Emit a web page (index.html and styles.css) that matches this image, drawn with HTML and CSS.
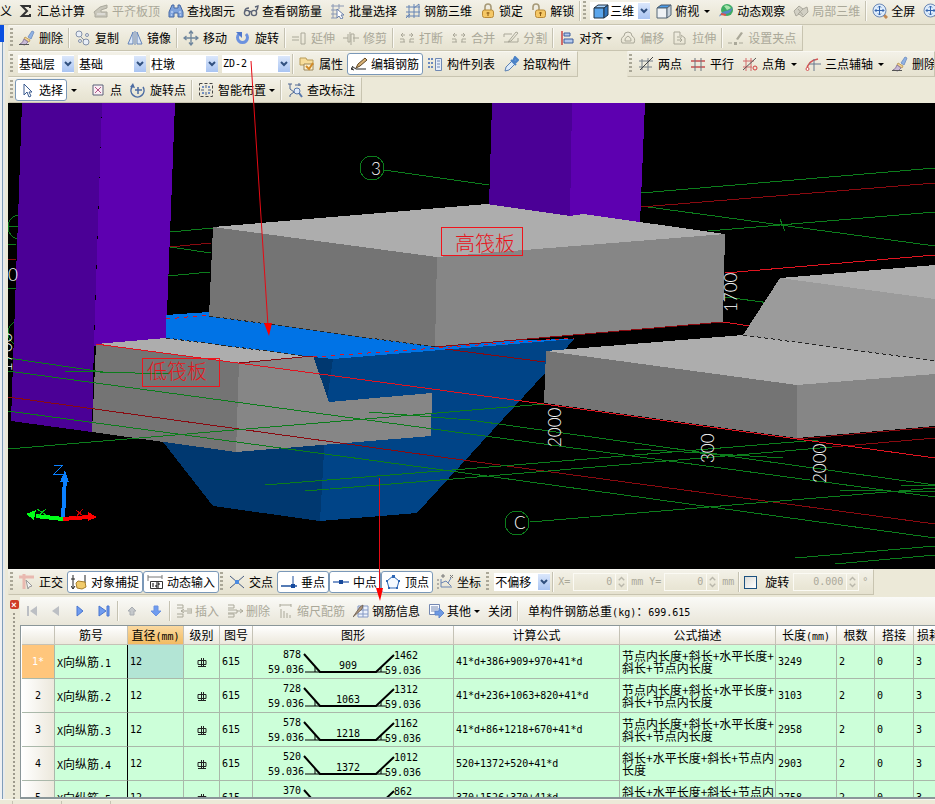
FILE: index.html
```html
<!DOCTYPE html>
<html lang="zh-CN">
<head>
<meta charset="utf-8">
<title>钢筋三维</title>
<link rel="stylesheet" href="styles.css">
</head>
<body>
<svg class="defs" aria-hidden="true">
  <symbol id="sigma" viewBox="0 0 16 16"><path d="M12 5V3H4l5 5-5 5h8v-2" fill="none" stroke="#333" stroke-width="2"/></symbol>
  <symbol id="align" viewBox="0 0 16 16"><path d="M1 9l6-5 7-2v3L8 7v2h6v5H2v-3z" fill="#c9c7bb" stroke="#aaa89c"/><path d="M4 11h8" stroke="#eee"/></symbol>
  <symbol id="find" viewBox="0 0 16 16"><path d="M4 2h2v3h4V2h2l3 7v5h-5v-4H6v4H1V9z" fill="#7fa3dc" stroke="#4668a3"/><path d="M3 9h2M11 9h2M3 12h1M12 12h1" stroke="#dfeaff"/></symbol>
  <symbol id="glasses" viewBox="0 0 16 16"><g fill="none" stroke="#5b6375" stroke-width="1.4"><circle cx="4" cy="10" r="2.6"/><circle cx="11" cy="10" r="2.6"/><path d="M6 9q1-1 2 0M2 8q0-3 4-3M13 8q2-2 2-5l-3 1"/></g></symbol>
  <symbol id="batch" viewBox="0 0 16 16"><path d="M1 3h13M1 7h8M1 11h6M1 15h6M3 1v14M9 1v5" stroke="#8a98b5" fill="none"/><path d="M7 6l7 6-3 0 2 3-2 1-2-3-2 2z" fill="#fff" stroke="#6a80ab"/></symbol>
  <symbol id="grid3" viewBox="0 0 16 16"><path d="M1 4h14M1 9h14M1 13h13M4 2v13M9 1v14M14 1v13M1 15l4-4M9 5l5-4" stroke="#6584b4" fill="none"/></symbol>
  <symbol id="lock" viewBox="0 0 16 16"><path d="M5 7V4q0-3 3-3t3 3v3" fill="none" stroke="#a79a78" stroke-width="1.6"/><rect x="2.500" y="7" width="11" height="7.500" rx="2" fill="#f5c866" stroke="#b98a37"/><path d="M8 9v4M6.500 10h3" stroke="#8c5b12"/></symbol>
  <symbol id="unlock" viewBox="0 0 16 16"><path d="M2 7V4q0-3 3-3t3 3v3" fill="none" stroke="#a79a78" stroke-width="1.600"/><rect x="4.500" y="7" width="10" height="7.500" rx="2" fill="#f5c866" stroke="#b98a37"/><path d="M9.500 9v4M8 10h3" stroke="#8c5b12"/></symbol>
  <symbol id="cube" viewBox="0 0 16 16"><path d="M1 5l4-3h10l-4 3z" fill="#a9d5ff" stroke="#234"/><path d="M1 5h10v10H1z" fill="#5ca6ec" stroke="#234"/><path d="M11 5l4-3v10l-4 3z" fill="#2f74bd" stroke="#234"/></symbol>
  <symbol id="cubetop" viewBox="0 0 16 16"><path d="M1 5l4-3h10l-4 3z" fill="#4a9be8" stroke="#456"/><path d="M1 5h10v10H1z" fill="#eef2f5" stroke="#567"/><path d="M11 5l4-3v10l-4 3z" fill="#c7d2dc" stroke="#567"/></symbol>
  <symbol id="orbit" viewBox="0 0 16 16"><circle cx="9" cy="7" r="6" fill="#3cab62"/><path d="M6 3q4-2 7 2l-4 2z" fill="#a9e4ae"/><path d="M1 14q1-5 7-6t7-5q-1 7-7 8t-7 3z" fill="#5886c7"/><path d="M3 11l5 1" stroke="#d9554b" stroke-width="2"/></symbol>
  <symbol id="blocks" viewBox="0 0 16 16"><path d="M1 8l5-5 4 3 4-2 1 5-5 5-4-3-3 2z" fill="#d2d0c4" stroke="#aaa89c"/><path d="M5 6l5 6M10 6l-5 5" stroke="#aaa89c"/></symbol>
  <symbol id="full" viewBox="0 0 16 16"><path d="M11 11l4 4" stroke="#c28a55" stroke-width="3"/><circle cx="7.500" cy="7.500" r="6.500" fill="#dcebfb" stroke="#6d89b5"/><path d="M7.500 3v9M3 7.500h9M6 4.500L7.500 3 9 4.500M6 10.500L7.500 12 9 10.500M4.500 6L3 7.500 4.500 9M10.500 6L12 7.500 10.500 9" stroke="#3565ae" fill="none"/></symbol>
  <symbol id="brush" viewBox="0 0 16 16"><path d="M9 7l4-6 2 1-3 7z" fill="#8fb3e5" stroke="#7b97c6"/><path d="M6 7l5 3-1 2-5-3z" fill="#f3d591" stroke="#c1a063"/><path d="M5 9l4 3-3 3-5-1q3-1 4-5z" fill="#c9bad6" stroke="#8f7da1"/><path d="M0 14.500h10" stroke="#555"/></symbol>
  <symbol id="copy" viewBox="0 0 16 16"><g fill="#e8eef7" stroke="#8491a8"><circle cx="4" cy="4" r="3"/><circle cx="11" cy="12" r="3"/><circle cx="12" cy="5" r="1.500"/><circle cx="5" cy="11" r="1.500"/></g><path d="M6 7l3 3" stroke="#8491a8"/></symbol>
  <symbol id="mirror" viewBox="0 0 16 16"><path d="M6 2v12H1zM10 2v12h5z" fill="#dce8f8" stroke="#6484b8"/><path d="M8 1v14" stroke="#6484b8"/></symbol>
  <symbol id="move" viewBox="0 0 16 16"><path d="M8 1v14M1 8h14M6 3.500L8 1l2 2.500M6 12.500L8 15l2-2.500M3.500 6L1 8l2.500 2M12.500 6L15 8l-2.500 2" fill="none" stroke="#6f869d" stroke-width="1.300"/></symbol>
  <symbol id="rotate" viewBox="0 0 16 16"><path d="M4 4a5 5 0 1 0 7 0" fill="none" stroke="#6c92df" stroke-width="3"/><path d="M1 2h6v6z" fill="#4d76cc"/></symbol>
  <symbol id="extend" viewBox="0 0 16 16"><path d="M1 7h7M1 10h7M10 3h4v11h-4z" fill="none" stroke="currentColor"/></symbol>
  <symbol id="trim" viewBox="0 0 16 16"><path d="M0 8h5M10 8h6M5 4v8h2V2M8 15V4h3v8" fill="none" stroke="currentColor"/></symbol>
  <symbol id="brk" viewBox="0 0 16 16"><path d="M1 12h5M10 12h5M1 9h4v3M15 9h-4v3M2 5h4M10 5h4M4 3L2 5l2 2M12 3l2 2-2 2" fill="none" stroke="currentColor"/></symbol>
  <symbol id="split" viewBox="0 0 16 16"><path d="M1 4h8M1 12h14V8M1 4v3M5 12l8-10 2 1-7 8z" fill="none" stroke="currentColor"/></symbol>
  <symbol id="alignto" viewBox="0 0 16 16"><path d="M3 1v14" stroke="#c94343" stroke-width="1.500"/><path d="M5 3h6v3H5zM5 9h9v4H5z" fill="#b5c9ec" stroke="#3d5c9c"/></symbol>
  <symbol id="offset" viewBox="0 0 16 16"><path d="M2 13q-2-5 2-7 0-4 4-4t4 4q4 2 2 7zM5 11q-1-3 3-5 4 2 3 5z" fill="none" stroke="currentColor"/></symbol>
  <symbol id="stretch" viewBox="0 0 16 16"><path d="M2 2h6v4M2 2v12h11V8L9 5M5 7h5M5 10h5M8 8l2 2-2 2" fill="none" stroke="currentColor"/></symbol>
  <symbol id="gripset" viewBox="0 0 16 16"><path d="M0 13h4M11 13h4" stroke="currentColor"/><path d="M6 12h3v3H6zM8 9l5-7 2 1-5 7z" fill="currentColor"/></symbol>
  <symbol id="prop" viewBox="0 0 16 16"><path d="M1 2h6l1 2h6v5H1z" fill="#f7dd9b" stroke="#b99c59"/><path d="M5 8h9v6H5z" fill="#fff3d0" stroke="#9b865b"/><path d="M7 10l3 3 4-6" fill="none" stroke="#d18a29" stroke-width="2"/></symbol>
  <symbol id="editbar" viewBox="0 0 16 16"><path d="M0 13q3-3 5 0M5 13h10M2 10l-2 3 3 1" fill="none" stroke="#222"/><path d="M5 12l2-4 7-6 2 2-7 6z" fill="#d9b275" stroke="#5e4524"/></symbol>
  <symbol id="list" viewBox="0 0 16 16"><path d="M1 3h2M1 7h2M1 11h2M4 3h2M4 7h2M4 11h2" stroke="#6a88bd" stroke-width="2"/><path d="M8.500 2.500h6v12h-6z" fill="#e6edf8" stroke="#6f88b3"/><path d="M10 5h3M10 8h3M10 11h3" stroke="#6f88b3"/></symbol>
  <symbol id="pick" viewBox="0 0 16 16"><path d="M2 15l1-4 6-6 3 3-6 6z" fill="#dceaf8" stroke="#5c81b3"/><path d="M8 4l5 5M10 5l2-4 3 3-3 3z" fill="#5b93da" stroke="#4b82c6" stroke-width="2"/></symbol>
  <symbol id="ax2" viewBox="0 0 16 16"><path d="M1 5h14M1 11h13M4 3v11M10 2v13" stroke="#77808a" fill="none"/><path d="M2 14L15 1" stroke="#444"/></symbol>
  <symbol id="axp" viewBox="0 0 16 16"><path d="M1 5h14M1 11h14" stroke="#c85050" stroke-width="1.400"/><path d="M5 2v13M11 2v13" stroke="#68757f"/></symbol>
  <symbol id="axa" viewBox="0 0 16 16"><path d="M1 5h11M1 11h9M4 2v13M9 2v13" stroke="#d36a6a"/><path d="M1 14L14 2" stroke="#555"/><circle cx="13" cy="12" r="2" fill="none" stroke="#d23b3b"/></symbol>
  <symbol id="ax3" viewBox="0 0 16 16"><path d="M2 14q0-9 11-11" fill="none" stroke="#d45353" stroke-width="1.400"/><path d="M4 8h12M9 3v12" stroke="#69788c"/><circle cx="2.500" cy="13" r="1.500" fill="#fff" stroke="#d45353"/></symbol>
  <symbol id="cursor" viewBox="0 0 16 16"><path d="M5 2v11l3-3 2 5 2-1-2-4h3z" fill="#fff" stroke="#3b5b8f"/></symbol>
  <symbol id="pt" viewBox="0 0 16 16"><path d="M3 3h10v10H3z" fill="#fbeef4" stroke="#5a6178"/><path d="M5 5l6 6M11 5l-6 6" stroke="#b05585"/></symbol>
  <symbol id="rotpt" viewBox="0 0 16 16"><path d="M2 5a6.500 6.500 0 1 0 11 0M8 5v7M5 8h7" fill="none" stroke="#4d6da3" stroke-width="1.500"/><path d="M0 5l3-4 2 5z" fill="#4d6da3"/></symbol>
  <symbol id="smart" viewBox="0 0 16 16"><path d="M1.500 1.500h13v13h-13z" fill="none" stroke="#444" stroke-dasharray="3 2"/><path d="M8 3v3M8 10v3M3 8h3M10 8h3" stroke="#53627c"/><path d="M4 4h2v2H4zM10 4h2v2h-2zM4 10h2v2H4zM10 10h2v2h-2z" fill="#6f8ec4"/></symbol>
  <symbol id="dim" viewBox="0 0 16 16"><path d="M1 2h4M3 2v5l4 3-4 3v2M8 3h6M12 1v3" fill="none" stroke="#4f6692"/><circle cx="10" cy="9" r="3" fill="#dfeafa" stroke="#5878ac"/><path d="M12 11l3 4" stroke="#5878ac" stroke-width="2"/></symbol>
  <symbol id="ortho" viewBox="0 0 16 16"><path d="M0 3h15M5 0v15" stroke="#e9b9b0" stroke-width="3"/><path d="M7 6l6 6-3 1-1 2z" fill="#f3f3f3" stroke="#9a9a9a"/></symbol>
  <symbol id="osnap" viewBox="0 0 16 16"><path d="M2 1v13M0 12l2 3 2-3M14 1v8M0 5h4" fill="none" stroke="#222"/><path d="M5 9l2-2 7 1 1 5-4 2-5-1z" fill="#f1cb6a" stroke="#a67e2a"/></symbol>
  <symbol id="dyn" viewBox="0 0 16 16"><path d="M1 1v6M1 3h14M15 1v4" stroke="#777" fill="none"/><path d="M3.500 7.500h12v7h-12z" fill="#fff" stroke="#333"/><path d="M6 9v4M9 9h3v2H9v2h3" stroke="#000" fill="none"/></symbol>
  <symbol id="cross" viewBox="0 0 16 16"><path d="M1 2l14 12M1 14L15 2" stroke="#445a82"/><path d="M6 6h4v4H6z" fill="#4b8be0"/></symbol>
  <symbol id="perp" viewBox="0 0 16 16"><path d="M0 12h16" stroke="#1d4f9c" stroke-width="1.500"/><path d="M12 2v11" stroke="#1d4f9c"/><path d="M10 10h4v4h-4z" fill="#164a9e"/></symbol>
  <symbol id="mid" viewBox="0 0 16 16"><path d="M0 8h16" stroke="#4d74b7" stroke-width="1.500"/><path d="M6 6h4v4H6z" fill="#17489a"/></symbol>
  <symbol id="vert" viewBox="0 0 16 16"><path d="M8 2l6 5-2 7H4L2 7z" fill="#f4f9ff" stroke="#2e67b5"/><path d="M7 1h3v3H7zM13 6h2v2h-2zM1 6h2v2H1zM3 13h2v2H3zM11 13h2v2h-2z" fill="#2e67b5"/></symbol>
  <symbol id="coord" viewBox="0 0 16 16"><path d="M4 5v8h11M4 9l5-2 5 5M14 4l-3 5" fill="none" stroke="#6a84b2"/><path d="M5 1h2v2H5zM13 1l3 3M16 1l-3 3M1 5v2M1 9v2M1 13v2" fill="none" stroke="#777"/></symbol>
  <symbol id="first" viewBox="0 0 16 16"><path d="M3 3h2v10H3zM13 3v10L6 8z" fill="#bcbfc4"/></symbol>
  <symbol id="prev" viewBox="0 0 16 16"><path d="M11 3v10L4 8z" fill="#bcbfc4"/></symbol>
  <symbol id="next" viewBox="0 0 16 16"><path d="M5 3v10l6-5z" fill="#6f9cf0" stroke="#4a76cf"/></symbol>
  <symbol id="last" viewBox="0 0 16 16"><path d="M3 3v10l7-5zM11 3h2v10h-2z" fill="#6f9cf0" stroke="#4a76cf"/></symbol>
  <symbol id="up" viewBox="0 0 16 16"><path d="M8 4l4 4h-2v4H6V8H4z" fill="#c5c8cb" stroke="#a9adb1"/></symbol>
  <symbol id="down" viewBox="0 0 16 16"><path d="M8 13l5-5h-3V3H6v5H3z" fill="#6f9cf0" stroke="#6a92e0"/></symbol>
  <symbol id="ins" viewBox="0 0 16 16"><path d="M1 2h6v3H1M1 11h6v3H1M5 8h11M8 6L5 8l3 2M11 6h5v4h-5" fill="none" stroke="currentColor"/></symbol>
  <symbol id="del" viewBox="0 0 16 16"><path d="M1 2h6v3H1M1 11h6v3H1M1 7h9v3H1M10 8h6M13 6l3 2-3 2" fill="none" stroke="currentColor"/></symbol>
  <symbol id="scale" viewBox="0 0 16 16"><path d="M2 1v3M2 2h11M13 1v3M3 6v9M6 8v7M9 10v5M12 12v3" fill="none" stroke="currentColor"/></symbol>
  <symbol id="info" viewBox="0 0 16 16"><path d="M5 3h10v11H5zM5 7h10M5 11h10M10 3v11" fill="#edf2fb" stroke="#8398c4"/><path d="M0 14L7 4l3-2-1 4z" fill="#b59c82" stroke="#77685a"/></symbol>
  <symbol id="other" viewBox="0 0 16 16"><path d="M1.500 1.500h10v10h-10z" fill="#fafcff" stroke="#7488b2"/><path d="M3 4h7M3 6h7M3 8h4" stroke="#7488b2"/><path d="M7 8h4V5l5 5-5 5v-3H7z" fill="#6c98e3" stroke="#5f86ca"/></symbol>
  <symbol id="chev" viewBox="0 0 12 14"><path d="M3 5l3 3 3-3" fill="none" stroke="#31507f" stroke-width="2"/></symbol>
  <symbol id="spin" viewBox="0 0 12 14"><path d="M3 5l3-3 3 3M3 9l3 3 3-3" fill="none" stroke="#b9b7ab" stroke-width="1.500"/></symbol>
  <symbol id="grade" viewBox="0 0 12 12"><path d="M2 3.500h8v4H2zM5.500 1v9M7.500 1v9M2 9.500h8" fill="none" stroke="#222"/></symbol>
  <symbol id="bent" viewBox="0 0 200 33"><path d="M51 9L67 27h56L141 10" fill="none" stroke="#000" stroke-width="2"/><path d="M52 27h16M62 21v6M122 27h12M128 22v5" fill="none" stroke="#000"/></symbol>
</svg>

<nav class="bar bar-top">
  <button class="btn cut">义</button>
  <button class="btn"><svg class="ic"><use href="#sigma"/></svg>汇总计算</button>
  <button class="btn" disabled><svg class="ic"><use href="#align"/></svg>平齐板顶</button>
  <button class="btn"><svg class="ic"><use href="#find"/></svg>查找图元</button>
  <button class="btn"><svg class="ic"><use href="#glasses"/></svg>查看钢筋量</button>
  <button class="btn"><svg class="ic"><use href="#batch"/></svg>批量选择</button>
  <button class="btn"><svg class="ic"><use href="#grid3"/></svg>钢筋三维</button>
  <button class="btn"><svg class="ic"><use href="#lock"/></svg>锁定</button>
  <button class="btn"><svg class="ic"><use href="#unlock"/></svg>解锁</button>
  <i class="sep"></i><i class="grip"></i>
  <label class="combo view"><svg class="ic"><use href="#cube"/></svg><select aria-label="视图"><option>三维</option></select><svg class="drop"><use href="#chev"/></svg></label>
  <button class="btn"><svg class="ic"><use href="#cubetop"/></svg>俯视<i class="arrow wide"></i></button>
  <button class="btn"><svg class="ic"><use href="#orbit"/></svg>动态观察</button>
  <button class="btn" disabled><svg class="ic"><use href="#blocks"/></svg>局部三维</button>
  <i class="sep"></i>
  <button class="btn"><svg class="ic"><use href="#full"/></svg>全屏</button>
  <button class="btn" aria-label="缩放"><svg class="ic"><use href="#full"/></svg></button>
</nav>

<div class="work">
  <aside class="edge"><i class="edge-title"></i></aside>
  <main class="main">
    <div class="line">
      <nav class="bar">
        <i class="grip"></i>
        <button class="btn"><svg class="ic"><use href="#brush"/></svg>删除</button><i class="sep"></i>
        <button class="btn"><svg class="ic"><use href="#copy"/></svg>复制</button>
        <button class="btn"><svg class="ic"><use href="#mirror"/></svg>镜像</button><i class="sep"></i>
        <button class="btn"><svg class="ic"><use href="#move"/></svg>移动</button>
        <button class="btn"><svg class="ic"><use href="#rotate"/></svg>旋转</button><i class="sep"></i>
        <button class="btn" disabled><svg class="ic"><use href="#extend"/></svg>延伸</button>
        <button class="btn" disabled><svg class="ic"><use href="#trim"/></svg>修剪</button><i class="sep"></i>
        <button class="btn" disabled><svg class="ic"><use href="#brk"/></svg>打断</button>
        <button class="btn" disabled><svg class="ic"><use href="#brk"/></svg>合并</button>
        <button class="btn" disabled><svg class="ic"><use href="#split"/></svg>分割</button><i class="sep"></i>
        <button class="btn"><svg class="ic"><use href="#alignto"/></svg>对齐<i class="arrow"></i></button>
        <button class="btn" disabled><svg class="ic"><use href="#offset"/></svg>偏移</button>
        <button class="btn" disabled><svg class="ic"><use href="#stretch"/></svg>拉伸</button><i class="sep"></i>
        <button class="btn" disabled><svg class="ic"><use href="#gripset"/></svg>设置夹点</button>
      </nav>
    </div>
    <div class="line">
      <nav class="bar">
        <i class="grip"></i>
        <label class="combo short"><select aria-label="楼层"><option>基础层</option></select><svg class="drop"><use href="#chev"/></svg></label>
        <label class="combo"><select aria-label="构件大类"><option>基础</option></select><svg class="drop"><use href="#chev"/></svg></label>
        <label class="combo"><select aria-label="构件类型"><option>柱墩</option></select><svg class="drop"><use href="#chev"/></svg></label>
        <label class="combo"><select class="n" aria-label="构件"><option>ZD-2</option></select><svg class="drop"><use href="#chev"/></svg></label>
        <i class="sep"></i>
        <button class="btn"><svg class="ic"><use href="#prop"/></svg>属性</button>
        <button class="btn on"><svg class="ic"><use href="#editbar"/></svg>编辑钢筋</button>
        <button class="btn"><svg class="ic"><use href="#list"/></svg>构件列表</button>
        <button class="btn"><svg class="ic"><use href="#pick"/></svg>拾取构件</button>
      </nav>
      <nav class="bar axis-bar">
        <i class="grip"></i>
        <button class="btn"><svg class="ic"><use href="#ax2"/></svg>两点</button>
        <button class="btn"><svg class="ic"><use href="#axp"/></svg>平行</button>
        <button class="btn"><svg class="ic"><use href="#axa"/></svg>点角<i class="arrow wide"></i></button>
        <button class="btn"><svg class="ic"><use href="#ax3"/></svg>三点辅轴<i class="arrow wide"></i></button>
        <button class="btn"><svg class="ic"><use href="#brush"/></svg>删除</button>
      </nav>
    </div>
    <div class="line">
      <nav class="bar">
        <i class="grip"></i>
        <button class="btn on"><svg class="ic"><use href="#cursor"/></svg>选择</button>
        <button class="btn split" aria-label="选择方式"><i class="arrow"></i></button>
        <button class="btn"><svg class="ic"><use href="#pt"/></svg>点</button>
        <button class="btn"><svg class="ic"><use href="#rotpt"/></svg>旋转点</button><i class="sep"></i>
        <button class="btn"><svg class="ic"><use href="#smart"/></svg>智能布置<i class="arrow"></i></button><i class="sep"></i>
        <button class="btn"><svg class="ic"><use href="#dim"/></svg>查改标注</button>
      </nav>
    </div>

    <svg class="scene" viewBox="8 103 927 466" preserveAspectRatio="xMinYMin slice" role="img" aria-label="三维视图">
      <g class="green">
        <circle cx="20" cy="227" r="12"/><circle cx="20" cy="333" r="12"/>
        <path d="M8 226h12M8 245l8-1M8 289l8-1M384 170l105 15M641 193l294-25M641 206l294 40M708 231l227-19M780 219l5 12M725 297l45 6M170 232l43-4M170 247l41 6M168 276l42-4"/>
      </g>
      <path class="dkred" d="M641 207l294-24M170 247l41-4M8 259h8"/>
      <path class="red" d="M725 273l210-18M723 322l27 4"/>
      <polygon fill="#4b0096" points="22,103 102,103 94,340 92,432 11,421"/>
      <polygon fill="#5d00b0" points="102,103 175,103 166,340 94,346"/>
      <polygon fill="#4b0096" points="492,103 572,103 570,217 489,206"/>
      <polygon fill="#5d00b0" points="572,103 645,103 640,223 570,217"/>
      <polygon fill="#003870" points="163,442 213,506 320,521 333,359 313,356 236,380"/>
      <polygon fill="#004487" points="333,359 574,339 546,372 417,513 320,521 327,400"/>
      <polygon fill="#0073e6" points="166,315 209,312 435,342 574,339 333,359 313,357 166,338"/>
      <polygon fill="#adadad" points="213,227 487,204 570,216 583,214 725,234 437,257"/>
      <polygon fill="#747474" points="213,227 437,257 435,347 209,316"/>
      <polygon fill="#868686" points="437,257 725,234 723,322 435,347"/>
      <polygon fill="#adadad" points="96,344 166,338 313,357 239,363"/>
      <polygon fill="#747474" points="96,344 239,363 236,452 92,432"/>
      <polygon fill="#868686" points="239,363 313,356 329,402 432,393 431,436 236,452"/>
      <polygon fill="#adadad" points="780,278 935,265 935,299"/>
      <polygon fill="#9b9b9b" points="780,278 935,299 935,361 743,335"/>
      <polygon fill="#adadad" points="546,351 743,335 935,361 935,374 797,385"/>
      <path class="dash" d="M743 335l192 26M209 316l226 31M166 338l147 19"/>
      <path class="dkred" d="M8 397l462 64 465 63M445 349l100 13M832 447l103-9M239 363l74-7M435 347l288-25M797 439l138-12"/>
      <path class="red dashed" d="M166 319l43-4M313 357l261-19"/>
      <path class="green" d="M8 358l102 15M64 371l106 3M8 371l462 63 465 63M8 411l457 62 470 65M8 449l536-45M369 412l101 8 465 65M265 485l200-16 353-29M305 491l160-13 367-31M634 449l149 9M530 522l405-34M839 490l96 2M900 485l35 1M795 558l140-12M835 564l100-9"/>
      <path class="red" d="M96 344l448 60 253 35 138 19"/>
      <polygon fill="#747474" points="546,351 797,385 797,438 544,403"/>
      <polygon fill="#868686" points="797,385 935,374 935,426 797,438"/>
      <g class="green"><circle cx="372" cy="168" r="12"/><circle cx="517" cy="523" r="12"/></g>
      <g class="cad">
        <text x="371" y="175">3</text><text x="514" y="529">C</text><text x="8" y="281">0</text>
        <text transform="translate(737 312) rotate(-90)">1700</text>
        <text transform="translate(561 447) rotate(-90)">2000</text>
        <text transform="translate(714 463) rotate(-90)">300</text>
        <text transform="translate(826 483) rotate(-90)">2000</text>
        <text transform="translate(12 372) rotate(-90)">1700</text>
      </g>
      <path d="M63 519l2-43" stroke="#0a80ff" stroke-width="4"/><polygon fill="#0a80ff" points="65,470 60,482 69,482"/>
      <path d="M63 519l-27-3" stroke="#00ff18" stroke-width="4"/><polygon fill="#00ff18" points="26,514 36,510 34,520"/>
      <path d="M63 519l25-2" stroke="#f00" stroke-width="4"/><polygon fill="#f00" points="97,517 88,512 88,521"/>
      <path d="M54 465h9l-9 9h10" fill="none" stroke="#0a80ff"/><path d="M37 509l9 6M46 509l-8 7" stroke="#00c818"/><path d="M76 510l7 6M83 509l-7 8" stroke="#c00"/>
      <rect class="tagbox" x="441.5" y="227.5" width="81" height="28"/><text class="tag" x="455" y="251">高筏板</text>
      <rect class="tagbox" x="142.500" y="358.500" width="77" height="28"/><text class="tag" x="147" y="379">低筏板</text>
    </svg>

    <div class="line snap-line">
      <nav class="bar">
        <i class="grip"></i>
        <button class="btn"><svg class="ic"><use href="#ortho"/></svg>正交</button>
        <button class="btn on"><svg class="ic"><use href="#osnap"/></svg>对象捕捉</button>
        <button class="btn on"><svg class="ic"><use href="#dyn"/></svg>动态输入</button>
        <i class="grip"></i>
        <button class="btn"><svg class="ic"><use href="#cross"/></svg>交点</button>
        <button class="btn on"><svg class="ic"><use href="#perp"/></svg>垂点</button>
        <button class="btn on"><svg class="ic"><use href="#mid"/></svg>中点</button>
        <button class="btn on"><svg class="ic"><use href="#vert"/></svg>顶点</button>
        <button class="btn"><svg class="ic"><use href="#coord"/></svg>坐标</button>
        <i class="grip"></i>
        <label class="combo short"><select aria-label="偏移方式"><option>不偏移</option></select><svg class="drop"><use href="#chev"/></svg></label>
        <i class="sep"></i>
        <label class="num n">X=<span class="field"><input value="0" disabled><svg class="drop"><use href="#spin"/></svg></span>mm</label>
        <label class="num n">Y=<span class="field"><input value="0" disabled><svg class="drop"><use href="#spin"/></svg></span>mm</label>
        <i class="sep"></i>
        <label class="check"><input type="checkbox">旋转</label>
        <label class="num n"><span class="field big"><input value="0.000" aria-label="旋转角度" disabled><svg class="drop"><use href="#spin"/></svg></span>°</label>
      </nav>
    </div>

    <section class="dock">
      <div class="dock-side"><button class="close" aria-label="关闭面板">×</button><i class="dots"></i></div>
      <div class="dock-body">
        <nav class="edit">
          <button class="btn nav" aria-label="首条" disabled><svg class="ic"><use href="#first"/></svg></button>
          <button class="btn nav" aria-label="上一条" disabled><svg class="ic"><use href="#prev"/></svg></button>
          <button class="btn nav" aria-label="下一条"><svg class="ic"><use href="#next"/></svg></button>
          <button class="btn nav" aria-label="末条"><svg class="ic"><use href="#last"/></svg></button>
          <i class="sep"></i>
          <button class="btn nav" aria-label="上移" disabled><svg class="ic"><use href="#up"/></svg></button>
          <button class="btn nav" aria-label="下移"><svg class="ic"><use href="#down"/></svg></button>
          <i class="sep"></i>
          <button class="btn" disabled><svg class="ic"><use href="#ins"/></svg>插入</button>
          <button class="btn" disabled><svg class="ic"><use href="#del"/></svg>删除</button>
          <button class="btn" disabled><svg class="ic"><use href="#scale"/></svg>缩尺配筋</button>
          <button class="btn"><svg class="ic"><use href="#info"/></svg>钢筋信息</button>
          <button class="btn"><svg class="ic"><use href="#other"/></svg>其他<i class="arrow"></i></button>
          <button class="btn">关闭</button>
          <i class="sep"></i>
          <span class="total">单构件钢筋总重<span class="n">(kg)</span>：<span class="n">699.615</span></span>
        </nav>
        <div class="sheet">
          <table>
            <colgroup><col class="c-no"><col class="c-name"><col class="c-dia"><col class="c-lv"><col class="c-fig"><col class="c-shape"><col class="c-calc"><col class="c-desc"><col class="c-len"><col class="c-qty"><col class="c-lap"><col class="c-loss"></colgroup>
            <thead><tr><th></th><th>筋号</th><th class="cur">直径<span class="n">(mm)</span></th><th>级别</th><th>图号</th><th>图形</th><th>计算公式</th><th>公式描述</th><th>长度<span class="n">(mm)</span></th><th>根数</th><th>搭接</th><th class="loss">损耗<span class="n">(%)</span></th></tr></thead>
            <tbody>
              <tr class="sel"><th class="n">1*</th><td><span class="n">X</span>向纵筋<span class="n">.1</span></td><td class="n dia">12</td><td class="lv"><svg class="grade"><use href="#grade"/></svg></td><td class="n">615</td><td class="shape"><svg class="fig" viewBox="0 0 200 33"><use href="#bent"/><text x="30" y="13">878</text><text x="15" y="28">59.036</text><text class="m" x="95" y="24">909</text><text x="141" y="14">1462</text><text x="132" y="29">59.036</text></svg></td><td class="n">41*d+386+909+970+41*d</td><td class="desc">节点内长度+斜长+水平长度+<br>斜长+节点内长度</td><td class="n">3249</td><td class="n">2</td><td class="n">0</td><td class="n">3</td></tr>
              <tr><th class="n">2</th><td><span class="n">X</span>向纵筋<span class="n">.2</span></td><td class="n dia">12</td><td class="lv"><svg class="grade"><use href="#grade"/></svg></td><td class="n">615</td><td class="shape"><svg class="fig" viewBox="0 0 200 33"><use href="#bent"/><text x="30" y="13">728</text><text x="15" y="28">59.036</text><text class="m" x="95" y="24">1063</text><text x="141" y="14">1312</text><text x="132" y="29">59.036</text></svg></td><td class="n">41*d+236+1063+820+41*d</td><td class="desc">节点内长度+斜长+水平长度+<br>斜长+节点内长度</td><td class="n">3103</td><td class="n">2</td><td class="n">0</td><td class="n">3</td></tr>
              <tr><th class="n">3</th><td><span class="n">X</span>向纵筋<span class="n">.3</span></td><td class="n dia">12</td><td class="lv"><svg class="grade"><use href="#grade"/></svg></td><td class="n">615</td><td class="shape"><svg class="fig" viewBox="0 0 200 33"><use href="#bent"/><text x="30" y="13">578</text><text x="15" y="28">59.036</text><text class="m" x="95" y="24">1218</text><text x="141" y="14">1162</text><text x="132" y="29">59.036</text></svg></td><td class="n">41*d+86+1218+670+41*d</td><td class="desc">节点内长度+斜长+水平长度+<br>斜长+节点内长度</td><td class="n">2958</td><td class="n">2</td><td class="n">0</td><td class="n">3</td></tr>
              <tr><th class="n">4</th><td><span class="n">X</span>向纵筋<span class="n">.4</span></td><td class="n dia">12</td><td class="lv"><svg class="grade"><use href="#grade"/></svg></td><td class="n">615</td><td class="shape"><svg class="fig" viewBox="0 0 200 33"><use href="#bent"/><text x="30" y="13">520</text><text x="15" y="28">59.036</text><text class="m" x="95" y="24">1372</text><text x="141" y="14">1012</text><text x="132" y="29">59.036</text></svg></td><td class="n">520+1372+520+41*d</td><td class="desc">斜长+水平长度+斜长+节点内<br>长度</td><td class="n">2903</td><td class="n">2</td><td class="n">0</td><td class="n">3</td></tr>
              <tr><th class="n">5</th><td><span class="n">X</span>向纵筋<span class="n">.5</span></td><td class="n dia">12</td><td class="lv"><svg class="grade"><use href="#grade"/></svg></td><td class="n">615</td><td class="shape"><svg class="fig" viewBox="0 0 200 33"><use href="#bent"/><text x="30" y="13">370</text><text x="15" y="28">59.036</text><text class="m" x="95" y="24">1526</text><text x="141" y="14">862</text><text x="132" y="29">59.036</text></svg></td><td class="n">370+1526+370+41*d</td><td class="desc">斜长+水平长度+斜长+节点内<br>长度</td><td class="n">2758</td><td class="n">2</td><td class="n">0</td><td class="n">3</td></tr>
            </tbody>
          </table>
        </div>
      </div>
    </section>
  </main>
</div>
<footer class="status"><i></i><i></i><i></i></footer>
<svg class="notes" viewBox="0 0 935 804" preserveAspectRatio="xMinYMin slice" aria-hidden="true">
  <path d="M251 61L268 326" stroke="#e60a14"/>
  <path d="M379 478h1v113h-1z" fill="#e60a14"/>
  <path d="M264 323h8l-3 13zM376 588h7l-3 13z" fill="#f00"/>
</svg>
</body>
</html>
```
FILE: styles.css
```css
* { box-sizing: border-box; }
body {
  margin: 0;
  height: 100vh;
  display: flex;
  flex-direction: column;
  overflow: hidden;
  position: relative;
  background: #ece9d8;
  color: #000;
  font: 12px/16px "Noto Sans CJK SC", sans-serif;
}
i { font-style: normal; }
button, select, input { font: inherit; color: inherit; }
.defs { position: absolute; width: 0; height: 0; }
.n { font-family: "DejaVu Sans Mono", monospace; font-size: 10px; }
span.n { line-height: 12px; }

/* toolbars */
.bar {
  display: flex;
  align-items: center;
  height: 26px;
  padding-right: 2px;
  white-space: nowrap;
  background: linear-gradient(#f3f1e8, #ebe8d8 60%, #e6e2d0);
  border: 1px solid;
  border-color: #f9f8f2 #c8c4b0 #c8c4b0 transparent;
}
.bar > * { flex: none; }
.bar-top { flex: none; height: 25px; padding-bottom: 2px; border-width: 0 0 1px; overflow: hidden; }
.line { display: flex; justify-content: space-between; flex: none; overflow: hidden; }
.snap-line { padding-bottom: 2px; }
.axis-bar { width: 308px; overflow: hidden; }
.btn {
  display: flex;
  align-items: center;
  height: 22px;
  padding: 0 3px;
  border: 1px solid transparent;
  border-radius: 3px;
  background: none;
  white-space: nowrap;
}
.btn:disabled { color: #aaa899; }
.btn.on { background: #fff; border-color: #7a98b8; }
.btn.cut { padding: 0 2px 0 0; border-width: 0; }
.btn.split { padding: 0 8px 0 0; }
.ic { width: 16px; height: 16px; margin-right: 4px; flex: none; }
.bar-top .ic, .edit .ic { margin-right: 3px; }
.arrow {
  border: 3px solid transparent;
  border-top-color: #000;
  border-bottom-width: 0;
  margin-left: 3px;
}
.arrow.wide { margin-left: 5px; }
.sep { width: 2px; height: 20px; margin: 0 1px; border-left: 1px solid #c5c2b2; border-right: 1px solid #fbfaf5; }
.grip {
  width: 3px;
  height: 20px;
  margin: 0 2px 0 1px;
  background: repeating-linear-gradient(#aaa797 0 2px, transparent 2px 4px);
}

/* drop-downs and fields */
.combo { position: relative; display: flex; align-items: center; width: 68px; height: 18px; margin: 0 1px 0 3px; background: #fff; }
.combo.short { width: 56px; }
.bar .combo.view { padding-left: 3px; width: 60px; margin: 0 2px; }
.bar .combo .ic { margin: 0; }
.combo select { flex: 1; min-width: 0; height: 18px; padding: 0 0 0 1px; border: 0; background: none; appearance: none; }
.drop { width: 12px; height: 16px; }
.combo .drop { position: absolute; right: 0; top: 1px; background: linear-gradient(#dbe7fb, #a9c4f2); pointer-events: none; }
.num { display: flex; align-items: center; gap: 3px; margin: 0 3px; color: #aaa899; }
.field { display: flex; align-items: center; width: 55px; height: 18px; border: 1px solid #fbfaf4; }
.field.big { width: 66px; }
.field input { flex: 1; min-width: 0; padding: 0 3px 0 0; border: 0; background: none; text-align: right; color: #aaa899; }
.field .drop { border-left: 1px solid #fbfaf4; }
.check { display: flex; align-items: center; gap: 8px; margin: 0 1px 0 3px; }
.check input { appearance: none; width: 13px; height: 13px; margin: 0; border: 1px solid #1c5180; background: linear-gradient(135deg, #dcdcd7, #fff); }

/* work area */
.work { flex: 1; min-height: 0; display: flex; }
.edge { flex: none; width: 8px; background: linear-gradient(90deg, #eef0f2 0 2px, #7f9db9 2px 3px, #e8eaea 3px 5px, #ece9d8 5px); }
.edge-title { display: block; width: 4px; height: 17px; background: #0a4fe0; }
.main { flex: 1; min-width: 0; display: flex; flex-direction: column; }

/* 3D view */
.scene { flex: 1; min-height: 0; width: 100%; background: #000; shape-rendering: crispEdges; }
.green { fill: none; stroke: #0c7d1c; }
.red { fill: none; stroke: #e01420; }
.dkred { fill: none; stroke: #8a0a10; }
.dash { fill: none; stroke: #222; stroke-dasharray: 4 3; }
.dashed { stroke-dasharray: 4 5; }
.cad { fill: #fff; font: 300 17px Lato, "Liberation Sans", sans-serif; }
.tagbox { fill: none; stroke: #f0141c; }
.tag { fill: #e6141c; font: 300 20px "Noto Sans CJK SC", sans-serif; }
.notes { position: absolute; inset: 0; width: 100%; height: 100%; pointer-events: none; }

/* rebar editing panel */
.dock { flex: none; height: 202px; display: flex; }
.dock-side { flex: none; width: 12px; display: flex; flex-direction: column; align-items: center; gap: 4px; padding-top: 3px; }
.close { width: 9px; height: 9px; padding: 0; border: 0; border-radius: 2px; background: #cf3b26; color: #fff; font: bold 9px/8px "Liberation Sans", sans-serif; }
.dots { flex: 1; width: 2px; background: repeating-linear-gradient(#9d9a8c 0 2px, transparent 2px 4px); }
.dock-body { flex: 1; min-width: 0; display: flex; flex-direction: column; }
.edit { flex: none; display: flex; align-items: center; height: 28px; white-space: nowrap; background: linear-gradient(#fafaf7, #e9e6d9); }
.edit > * { flex: none; }
.nav { width: 24px; }
.edit .nav .ic { margin: 0; }
.total { margin-left: 8px; }
.sheet { flex: 1; min-height: 0; overflow: hidden; border: solid #8a9699; border-width: 1px 0 2px 1px; padding-left: 1px; background: #fff; }
table { width: 948px; table-layout: fixed; border-collapse: separate; border-spacing: 0; }
.c-no { width: 33px; }
.c-name { width: 73px; }
.c-dia { width: 56px; }
.c-lv { width: 36px; }
.c-fig { width: 33px; }
.c-shape { width: 201px; }
.c-calc { width: 166px; }
.c-desc { width: 156px; }
.c-len { width: 61px; }
.c-qty { width: 38px; }
.c-lap { width: 39px; }
.c-loss { width: 56px; }
th, td { padding: 0 2px; border: solid #aab8aa; border-width: 0 1px 1px 0; text-align: left; font-weight: normal; white-space: nowrap; overflow: hidden; }
thead th { height: 19px; padding: 0; text-align: center; background: linear-gradient(#fff, #ece8dc); border-color: #c5c2b6; line-height: 16px; }
thead .cur { background: linear-gradient(#fbd9a0, #f2bb62); }
thead .loss { text-align: left; padding-left: 3px; }
tbody tr { height: 34px; }
tbody td { height: 34px; background: #ccffd9; }
tbody th { text-align: center; background: linear-gradient(90deg, #fff, #ece8dc); }
.sel th { background: #ffc67c; color: #fff; }
td:nth-child(2) { border-right-color: #000; }
.sel .dia { background: #b3e5d5; }
td.lv { text-align: center; }
.grade { display: inline-block; width: 12px; height: 12px; vertical-align: middle; }
td.shape { padding: 0; }
.fig { display: block; width: 200px; height: 33px; font: 10px "DejaVu Sans Mono", monospace; }
.fig .m { text-anchor: middle; }
td.desc { line-height: 12px; }
.status { flex: none; height: 5px; display: flex; gap: 48px; border-top: 1px solid #f8f7f0; padding-left: 12px; }
.status i { width: 1px; height: 4px; margin-top: 1px; background: #c5c2b2; }
```
